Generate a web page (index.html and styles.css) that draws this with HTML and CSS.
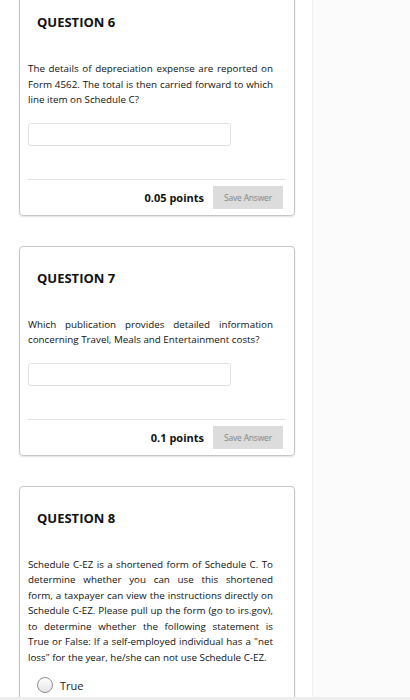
FILE: index.html
```html
<!DOCTYPE html>
<html>
<head>
<meta charset="utf-8">
<link rel="stylesheet" href="styles.css">
</head>
<body>
<div class="page">
  <div class="column">
    <section class="card first">
      <h2 class="qtitle">QUESTION 6</h2>
      <p class="qtext">The details of depreciation expense are reported on Form 4562. The total is then carried forward to which line item on Schedule C?</p>
      <div class="answer"></div>
      <div class="footer">
        <span class="points">0.05 points</span>
        <span class="save">Save Answer</span>
      </div>
    </section>
    <section class="card">
      <h2 class="qtitle">QUESTION 7</h2>
      <p class="qtext">Which publication provides detailed information concerning Travel, Meals and Entertainment costs?</p>
      <div class="answer"></div>
      <div class="footer">
        <span class="points">0.1 points</span>
        <span class="save">Save Answer</span>
      </div>
    </section>
    <section class="card last">
      <h2 class="qtitle">QUESTION 8</h2>
      <p class="qtext">
        <span class="line">Schedule C-EZ is a shortened form of Schedule C. To</span>
        <span class="line">determine whether you can use this shortened</span>
        <span class="line">form, a taxpayer can view the instructions directly on</span>
        <span class="line">Schedule C-EZ. Please pull up the form (go to irs.gov),</span>
        <span class="line">to determine whether the following statement is</span>
        <span class="line">True or False: If a self-employed individual has a "net</span>
        <span class="line end">loss" for the year, he/she can not use Schedule C-EZ.</span>
      </p>
      <div class="option"><span class="radio"></span><span class="label">True</span></div>
    </section>
  </div>
  <div class="side"></div>
</div>
<div class="bottom-edge"></div>
</body>
</html>
```
FILE: styles.css
```css
html, body {
  margin: 0;
  padding: 0;
  height: 100%;
  overflow: hidden;
  background: #fbfbfb;
  font-family: "Open Sans", "Liberation Sans", sans-serif;
  color: #222;
}
.page {
  display: flex;
  height: 700px;
}
.column {
  width: 312px;
  background: #fff;
  border-right: 1px solid #f0f0f0;
  display: flex;
  flex-direction: column;
  gap: 30px;
  flex: none;
}
.side {
  flex: 1;
}
.card {
  margin-left: 19px;
  width: 276px;
  border: 1px solid #c6c6c6;
  border-radius: 4px;
  box-shadow: 0 1px 2px rgba(0,0,0,0.12);
  padding: 0 8px 6px 8px;
  box-sizing: border-box;
  flex: none;
}
.card.first {
  margin-top: -11px;
}
.qtitle {
  margin: 22px 0 0 9px;
  font-size: 13px;
  line-height: 18px;
  font-weight: 700;
  color: #111;
}
.card.first .qtitle {
  margin-top: 23px;
}
.qtext {
  margin: 30px 0 0 0;
  width: 245px;
  font-size: 9.8px;
  line-height: 15.5px;
  text-align: justify;
  color: #111;
}
.line {
  display: block;
  text-align: justify;
  text-align-last: justify;
}
.line.end {
  text-align-last: left;
}
.answer {
  margin-top: 15px;
  width: 203px;
  height: 23px;
  border: 1px solid #e2e2e2;
  border-radius: 3px;
  box-sizing: border-box;
  background: #fff;
}
.footer {
  margin-top: 33px;
  border-top: 1px solid #e3e3e3;
  padding-top: 6px;
  display: flex;
  justify-content: flex-end;
  align-items: center;
  gap: 9px;
}
.points {
  font-size: 11px;
  font-weight: 700;
  color: #111;
}
.save {
  width: 70px;
  height: 23px;
  margin-right: 3px;
  background: #dcdcdc;
  color: #858585;
  font-size: 8.5px;
  display: flex;
  align-items: center;
  justify-content: center;
  letter-spacing: -0.2px;
}
.option {
  margin: 12px 0 0 9px;
  display: flex;
  align-items: center;
  gap: 7px;
  padding-bottom: 20px;
}
.radio {
  width: 14px;
  height: 14px;
  border: 1px solid #8f8f8f;
  border-radius: 50%;
  background: linear-gradient(#fdfdfd, #e4e4e4);
  flex: none;
}
.label {
  font-size: 11px;
  color: #222;
}
.bottom-edge {
  position: fixed;
  left: 0;
  right: 0;
  bottom: 0;
  height: 3px;
  background: #eeeeee;
}
```
